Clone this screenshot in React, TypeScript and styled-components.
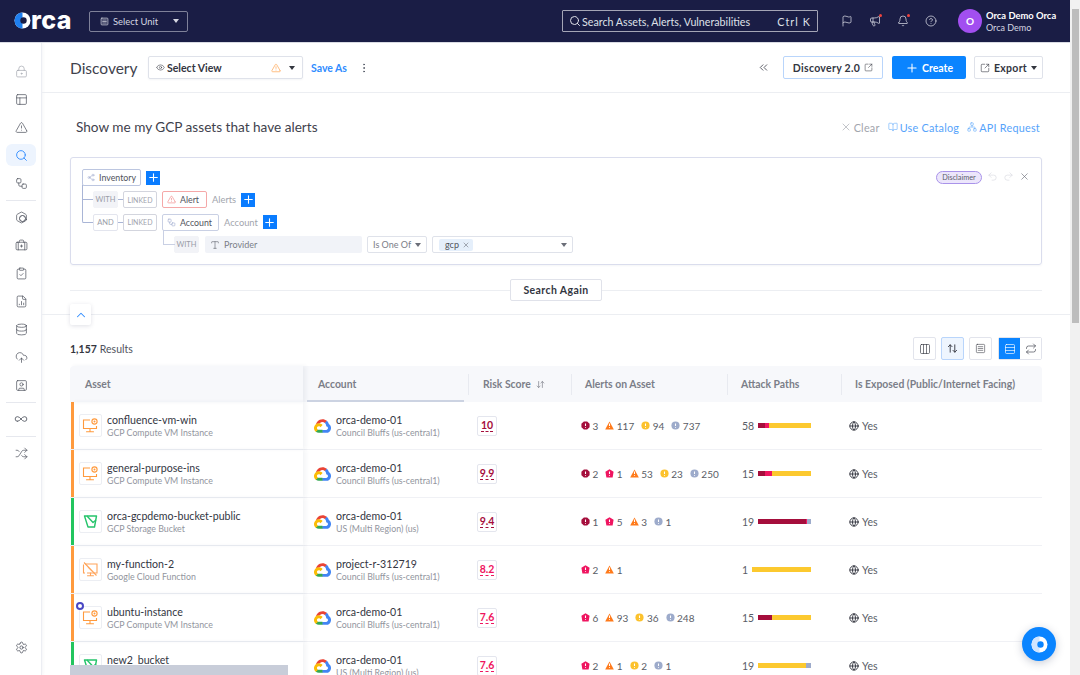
import React from "react";
import styled, { createGlobalStyle } from "styled-components";
import {
  ArrowDownUp, ArrowUpDown, BriefcaseMedical, ChevronUp, ChevronsLeft, CircleHelp, ClipboardCheck, CloudUpload, Columns3,
  Database, Eye, Flag, Globe, Hexagon, Infinity as InfinityIcon, LockKeyhole, Megaphone, Bell, PanelsTopLeft,
  Plus, Redo2, Repeat, Rows3, Search, Settings, Share2, Shuffle, SquareArrowOutUpRight, SquareMenu, SquareUser,
  TriangleAlert, Type, Undo2, Workflow, X, EllipsisVertical, BookOpen, FileChartColumn, Network,
} from "lucide-react";

const GlobalStyle = createGlobalStyle`
  html, body { margin: 0; padding: 0; height: 100%; overflow: hidden; background: #fff; }
  * { box-sizing: border-box; }
  body { font-family: "Lato", "Open Sans", sans-serif; color: #3c3f4a; }
`;

const Page = styled.div`
  height: 100vh;
  overflow: hidden;
  padding-right: 10px;
`;

const ScrollTrack = styled.div`
  position: fixed;
  top: 0;
  right: 0;
  bottom: 0;
  width: 10px;
  background: #f1f1f1;
  padding: 9px 1px 0 2px;
`;

const ScrollThumb = styled.div`
  height: 314px;
  background: #bdbdbd;
`;

const TopBar = styled.header`
  height: 43px;
  background: #1a1d45;
  border-bottom: 1px solid #d9dbe3;
  display: flex;
  align-items: center;
  padding: 0 11px 0 14px;
  color: #fff;
`;

const Logo = styled.div`
  display: flex;
  align-items: center;
  width: 75px;
  font-family: "Inter", sans-serif;
  font-size: 25px;
  font-weight: 800;
  letter-spacing: 0.4px;
  line-height: 1;
  margin-top: -2px;
`;

const UnitSelect = styled.div`
  width: 99px;
  height: 21px;
  border: 1px solid #7f8199;
  border-radius: 2px;
  display: flex;
  align-items: center;
  gap: 4px;
  padding: 0 8px 0 10px;
  font-size: 9.4px;
  color: #d6d7e2;
`;

const Caret = styled.span<{ $color?: string }>`
  margin-left: auto;
  width: 0;
  height: 0;
  border-left: 3px solid transparent;
  border-right: 3px solid transparent;
  border-top: 4px solid ${(p) => p.$color || "#d6d7e2"};
`;

const GlobalSearch = styled.div`
  margin-left: auto;
  width: 256px;
  height: 22px;
  border: 1px solid #a4a5b6;
  border-radius: 1px;
  display: flex;
  align-items: center;
  gap: 1px;
  padding: 0 6px 0 6px;
  font-size: 10.7px;
  color: #dfe0e8;
`;

const Shortcut = styled.span`
  margin-left: auto;
  letter-spacing: 1.1px;
  font-size: 10.7px;
`;

const TopIcons = styled.div`
  display: flex;
  align-items: center;
  gap: 16px;
  margin-left: 23px;
  margin-right: 21px;
  color: #e4e5ee;
`;

const Dotted = styled.span`
  position: relative;
  display: flex;
  &::after {
    content: "";
    position: absolute;
    top: -1px;
    right: -1px;
    width: 3px;
    height: 3px;
    border-radius: 50%;
    background: #f0443e;
  }
`;

const Avatar = styled.div`
  width: 24px;
  height: 24px;
  border-radius: 50%;
  background: #a24ff0;
  color: #fff;
  font-size: 10px;
  font-weight: 700;
  display: flex;
  align-items: center;
  justify-content: center;
`;

const UserInfo = styled.div`
  margin-left: 4px;
  width: 73px;
  display: flex;
  flex-direction: column;
  gap: 1px;
  font-size: 9px;
  line-height: 11px;
  color: #d6d7e2;
  b { color: #fff; font-size: 9.4px; font-weight: 700; white-space: nowrap; }
`;

const Body = styled.div`
  display: flex;
  height: 632px;
  overflow: hidden;
`;

const Sidebar = styled.nav`
  flex: none;
  width: 42px;
  height: 632px;
  border-right: 1px solid #eceef3;
  box-shadow: 1px 0 3px rgba(40, 50, 90, 0.05);
  padding: 14px 5px 14px 6px;
  display: flex;
  flex-direction: column;
  align-items: center;
  color: #4a4e5a;
  background: #fff;
`;

const NavItem = styled.div<{ $active?: boolean; $faint?: boolean }>`
  flex: none;
  width: 30px;
  height: 22px;
  margin: 3px 0;
  border-radius: 6px;
  display: flex;
  align-items: center;
  justify-content: center;
  background: ${(p) => (p.$active ? "#edf4fe" : "transparent")};
  color: ${(p) => (p.$active ? "#2f8cff" : p.$faint ? "#a4a7af" : "inherit")};
`;

const NavRule = styled.div`
  flex: none;
  width: 30px;
  height: 1px;
  margin: 3px 0 2px;
  background: #e6e8ee;
`;

const NavBottom = styled(NavItem)`
  margin-top: auto;
`;

const HexBadge = styled.span`
  position: relative;
  display: flex;
  &::after {
    content: "";
    position: absolute;
    left: 4px;
    top: 4px;
    width: 5px;
    height: 5px;
    border-radius: 50%;
    border: 1px solid #4a4e5a;
  }
`;

const Main = styled.main`
  flex: 1;
  min-width: 0;
`;

const PageHeader = styled.div`
  height: 50px;
  border-bottom: 1px solid #eceef2;
  display: flex;
  align-items: center;
  padding: 0 27px 0 28px;
`;

const Title = styled.h1`
  margin: 0 12px 0 0;
  font-size: 15.5px;
  font-weight: 400;
  color: #3f424d;
  width: 66px;
`;

const ViewSelect = styled.div`
  width: 155px;
  height: 23px;
  border: 1px solid #dfe2ea;
  border-radius: 2px;
  display: flex;
  align-items: center;
  gap: 2px;
  padding: 0 7px;
  font-size: 10.5px;
  font-weight: 700;
  color: #33363f;
  box-shadow: 0 1px 2px rgba(40, 50, 90, 0.05);
`;

const SaveLink = styled.span`
  margin-left: 8px;
  font-size: 10.5px;
  font-weight: 700;
  color: #2f8cff;
`;

const HeaderRight = styled.div`
  margin-left: auto;
  display: flex;
  align-items: center;
`;

const GhostButton = styled.div`
  height: 23px;
  padding: 0 7px;
  display: flex;
  align-items: center;
  gap: 4px;
  border: 1px solid #dfe2ea;
  border-radius: 2px;
  font-size: 10.5px;
  font-weight: 700;
  letter-spacing: 0.3px;
  color: #33363f;
  background: #fff;
`;

const Version = styled(GhostButton)`
  width: 100px;
  margin: 0 9px 0 13px;
  justify-content: center;
  border-color: #b9d5fb;
`;

const CreateButton = styled.div`
  width: 74px;
  height: 23px;
  border-radius: 2px;
  background: #0a84ff;
  color: #fff;
  font-size: 10.5px;
  font-weight: 700;
  display: flex;
  align-items: center;
  justify-content: center;
  gap: 3px;
`;

const ExportButton = styled(GhostButton)`
  width: 69px;
  margin-left: 8px;
  padding: 0 3px;
  justify-content: center;
  svg { flex: none; }
`;

const PromptRow = styled.div`
  height: 64px;
  padding: 24px 30px 20px 34px;
  display: flex;
  align-items: center;
  font-size: 13.6px;
  color: #3f424d;
`;

const PromptActions = styled.div`
  margin-left: auto;
  display: flex;
  align-items: center;
  gap: 8px;
  font-size: 10.8px;
  letter-spacing: 0.25px;
`;

const PromptAction = styled.span<{ $muted?: boolean }>`
  display: flex;
  align-items: center;
  gap: 2px;
  color: ${(p) => (p.$muted ? "#a2a5ad" : "#56a3fb")};
`;

const QueryCard = styled.section`
  margin: 0 28px;
  height: 108px;
  border: 1px solid #dadded;
  border-radius: 3px;
  padding: 11px 11px;
  display: flex;
  justify-content: space-between;
  box-shadow: 0 1px 2px rgba(40, 50, 90, 0.05);
`;

const Tree = styled.div`
  position: relative;
  display: flex;
  flex-direction: column;
  gap: 5.4px;
  &::before {
    content: "";
    position: absolute;
    left: 0;
    top: 16px;
    width: 11px;
    height: 37px;
    border-left: 1px solid #a9b5d6;
    border-bottom: 1px solid #a9b5d6;
    border-bottom-left-radius: 2px;
  }
`;

const TreeRow = styled.div<{ $indent?: number }>`
  height: 17px;
  display: flex;
  align-items: center;
  gap: 5px;
  margin-left: ${(p) => p.$indent || 0}px;
`;

const OpChip = styled.div<{ $filled?: boolean; $line?: boolean }>`
  position: relative;
  width: 25px;
  height: 17px;
  border-radius: 2px;
  background: ${(p) => (p.$filled ? "#f2f3f7" : "#fff")};
  border: 1px solid ${(p) => (p.$filled ? "#f2f3f7" : "#e3e5ee")};
  color: #9a9da8;
  font-size: 7.5px;
  display: flex;
  align-items: center;
  justify-content: center;
  &::before {
    content: "";
    display: ${(p) => (p.$line ? "block" : "none")};
    position: absolute;
    left: -11px;
    top: 7px;
    width: 10px;
    height: 1px;
    background: #a9b5d6;
  }
`;

const LinkedChip = styled.div`
  position: relative;
  width: 34px;
  height: 17px;
  border: 1px solid #d3d5de;
  border-radius: 2px;
  color: #a0a3ad;
  font-size: 7px;
  display: flex;
  align-items: center;
  justify-content: center;
  &::before {
    content: "";
    position: absolute;
    left: -6px;
    top: 7px;
    width: 5px;
    height: 1px;
    background: #a9b5d6;
  }
`;

const EntityChip = styled.div<{ $tone?: string; $w: number }>`
  width: ${(p) => p.$w}px;
  height: 17px;
  border: 1px solid ${(p) => p.$tone || "#c9d0e4"};
  border-radius: 2px;
  display: flex;
  align-items: center;
  gap: 4px;
  padding: 0 4px;
  font-size: 8.8px;
  color: #50535d;
  background: #fff;
`;

const ChipLabel = styled.span`
  font-size: 9.3px;
  color: #a2a5ad;
`;

const AddButton = styled.div`
  width: 14px;
  height: 14px;
  background: #0a7cff;
  color: #fff;
  display: flex;
  align-items: center;
  justify-content: center;
`;

const SubOp = styled(OpChip)`
  &::before {
    display: block;
    left: -12px;
    top: -7px;
    width: 11px;
    height: 14px;
    background: none;
    border-left: 1px solid #c9d0e4;
    border-bottom: 1px solid #c9d0e4;
  }
`;

const FieldBox = styled.div`
  width: 157px;
  height: 17px;
  margin-left: 2px;
  background: #f1f3f8;
  border-radius: 2px;
  display: flex;
  align-items: center;
  gap: 4px;
  padding: 0 5px;
  font-size: 9px;
  color: #7b7e88;
`;

const OpSelect = styled.div<{ $w: number }>`
  width: ${(p) => p.$w}px;
  height: 17px;
  border: 1px solid #dfe2ea;
  border-radius: 2px;
  display: flex;
  align-items: center;
  padding: 0 5px;
  font-size: 9px;
  color: #7b7e88;
`;

const ValueTag = styled.span`
  height: 12px;
  padding: 0 3px 0 6px;
  border-radius: 2px;
  margin-left: 1px;
  background: #e5effb;
  display: flex;
  align-items: center;
  gap: 3px;
  font-size: 9px;
  color: #50535d;
`;

const CardTools = styled.div`
  display: flex;
  align-items: flex-start;
  gap: 5px;
  padding: 2px 0 0 0;
  color: #d5d7de;
`;

const Disclaimer = styled.span`
  width: 46px;
  height: 13px;
  border: 1px solid #a993ea;
  border-radius: 7px;
  background: #ece6fb;
  color: #5a5d6a;
  font-size: 7.3px;
  display: flex;
  align-items: center;
  justify-content: center;
`;

const SearchAgainRow = styled.div`
  margin: 14px 28px 0;
  display: flex;
  align-items: center;
`;

const Rule = styled.div`
  flex: 1;
  height: 1px;
  background: #eceef2;
`;

const SearchAgain = styled.div`
  width: 92px;
  height: 22px;
  border: 1px solid #e0e2ea;
  border-radius: 2px;
  font-size: 10.5px;
  font-weight: 700;
  letter-spacing: 0.4px;
  color: #33363f;
  display: flex;
  align-items: center;
  justify-content: center;
`;

const CollapseRow = styled.div`
  position: relative;
  height: 21px;
  margin-top: 3px;
  padding-left: 28px;
  &::before {
    content: "";
    position: absolute;
    left: 0;
    right: 0;
    top: 10px;
    height: 1px;
    background: #eceef2;
  }
`;

const CollapseButton = styled.div`
  position: relative;
  width: 21px;
  height: 21px;
  border-radius: 2px;
  background: #fff;
  box-shadow: 0 1px 4px rgba(40, 50, 90, 0.15);
  color: #2f8cff;
  display: flex;
  align-items: center;
  justify-content: center;
`;

const ResultsBar = styled.div`
  margin: 12px 28px 0;
  height: 23px;
  display: flex;
  align-items: center;
  font-size: 10.5px;
  color: #50535d;
  b { color: #33363f; margin-right: 3px; }
`;

const ViewTools = styled.div`
  margin-left: auto;
  display: flex;
  gap: 5px;
`;

const ToolButton = styled.div<{ $on?: boolean }>`
  width: 23px;
  height: 23px;
  border: 1px solid ${(p) => (p.$on ? "#b9d5fb" : "#e2e4ec")};
  border-radius: 2px;
  background: ${(p) => (p.$on ? "#eef5fe" : "#fff")};
  color: #33363f;
  display: flex;
  align-items: center;
  justify-content: center;
`;

const Segmented = styled.div`
  margin-left: 1px;
  width: 44px;
  height: 23px;
  border: 1px solid #e2e4ec;
  border-radius: 2px;
  display: flex;
`;

const Segment = styled.div<{ $on?: boolean }>`
  flex: 1;
  background: ${(p) => (p.$on ? "#0a84ff" : "#fff")};
  color: ${(p) => (p.$on ? "#fff" : "#3c3f4a")};
  display: flex;
  align-items: center;
  justify-content: center;
`;

const Table = styled.div`
  margin: 6px 28px 0;
`;

const columns = "233px 165px 103px 156px 114px 1fr";

const HeaderRow = styled.div`
  display: grid;
  grid-template-columns: ${columns};
  height: 36px;
  background: #f7f8fb;
  border-radius: 4px 4px 0 0;
  font-size: 10.4px;
  font-weight: 700;
  color: #7b7e88;
`;

const HeadCell = styled.div<{ $pad: number; $rule?: boolean }>`
  position: relative;
  display: flex;
  align-items: center;
  gap: 5px;
  padding-left: ${(p) => p.$pad}px;
  &::before {
    content: "";
    display: ${(p) => (p.$rule ? "block" : "none")};
    position: absolute;
    left: 0;
    top: 8px;
    height: 21px;
    width: 1px;
    background: #e8eaf0;
  }
`;

const AssetHead = styled(HeadCell)`
  box-shadow: 3px 0 4px rgba(40, 50, 90, 0.06);
`;

const AccountHead = styled(HeadCell)`
  &::after {
    content: "";
    position: absolute;
    left: 4px;
    right: 4px;
    bottom: 0;
    height: 2.5px;
    background: #ccd3e2;
  }
`;

const Row = styled.div`
  display: grid;
  grid-template-columns: ${columns};
  height: 48px;
  border-bottom: 1px solid #f0f1f5;
`;

const AssetCell = styled.div<{ $bar: string }>`
  margin-left: 1px;
  border-left: 3px solid ${(p) => p.$bar};
  padding-left: 5px;
  display: flex;
  align-items: center;
  gap: 5px;
  box-shadow: 3px 0 4px rgba(40, 50, 90, 0.05);
`;

const IconBox = styled.div`
  position: relative;
  flex: none;
  width: 23px;
  height: 23px;
  border: 1px solid #eceef3;
  border-radius: 2px;
  display: flex;
  align-items: center;
  justify-content: center;
`;

const PinDot = styled.span`
  position: absolute;
  left: -4px;
  top: -5px;
  width: 8px;
  height: 8px;
  border-radius: 50%;
  background: #fff;
  border: 2px solid #4a47c4;
`;

const Stack = styled.div`
  display: flex;
  flex-direction: column;
  min-width: 0;
`;

const Name = styled.div`
  font-size: 10.6px;
  line-height: 13px;
  color: #33363f;
  white-space: nowrap;
`;

const Sub = styled.div`
  font-size: 8.8px;
  line-height: 11px;
  color: #92959e;
  white-space: nowrap;
`;

const AccountCell = styled.div`
  padding-left: 11px;
  display: flex;
  align-items: center;
  gap: 5px;
`;

const RiskCell = styled.div`
  padding-left: 9px;
  display: flex;
  align-items: center;
`;

const RiskBox = styled.div<{ $color: string }>`
  width: 20px;
  height: 20px;
  border: 1px solid #e4e6ee;
  border-radius: 2px;
  display: flex;
  align-items: center;
  justify-content: center;
  color: ${(p) => p.$color};
  font-size: 10.5px;
  font-weight: 700;
  span {
    line-height: 11px;
    border-bottom: 1px dashed ${(p) => p.$color};
  }
`;

const AlertsCell = styled.div`
  padding-left: 10px;
  display: flex;
  align-items: center;
  gap: 7px;
`;

const AlertCount = styled.span`
  display: flex;
  align-items: center;
  gap: 2.5px;
  font-size: 10px;
  color: #5a5d66;
`;

const PathsCell = styled.div`
  padding-left: 15px;
  display: flex;
  align-items: center;
`;

const PathsInner = styled.div`
  width: 69px;
  display: flex;
  align-items: center;
  gap: 4px;
  font-size: 10.5px;
  color: #5a5d66;
`;

const Bar = styled.div`
  flex: 1;
  height: 4.5px;
  display: flex;
`;

const BarPart = styled.div<{ $w: number; $color: string }>`
  flex: ${(p) => p.$w};
  background: ${(p) => p.$color};
`;

const ExposedCell = styled.div`
  padding-left: 8px;
  display: flex;
  align-items: center;
  gap: 3px;
  font-size: 10.5px;
  color: #5a5d66;
`;

const TableThumb = styled.div`
  position: fixed;
  left: 70px;
  bottom: 0;
  width: 218px;
  height: 10px;
  background: #c8cdd9;
`;

const ChatBubble = styled.div`
  position: fixed;
  left: 1022px;
  top: 627px;
  width: 34px;
  height: 34px;
  border-radius: 50%;
  background: #0a84ff;
  box-shadow: 0 2px 8px rgba(40, 50, 90, 0.25);
  display: flex;
  align-items: center;
  justify-content: center;
`;

// crescent on the left, solid on the right, hole pushed to the right
function LogoRing({ left, hole }: { left: string; hole: string }) {
  return (
    <svg width="17" height="17" viewBox="0 0 17 17" style={{ flex: "none", marginRight: 0 }}>
      <circle cx="8.5" cy="8.5" r="8" fill="#fff" />
      <path d="M8.5 .5A8 8 0 0 0 8.5 16.5Z" fill={left} />
      <circle cx="9.5" cy="8.5" r="3.2" fill={hole} />
    </svg>
  );
}

function GoogleCloud() {
  return (
    <svg width="17" height="14" viewBox="0 0 256 206" style={{ flex: "none" }}>
      <path fill="#EA4335" d="M170.25 56.82l22.25-22.25 1.48-9.37C153.44-11.68 88.98-7.5 52.42 33.92 42.27 45.42 34.73 59.76 30.72 74.57l7.97-1.12 44.7-7.35 3.45-3.53c19.88-21.84 53.5-24.78 76.46-6.2l6.95.45z" />
      <path fill="#4285F4" d="M224.2 73.92c-5.14-18.92-15.69-35.93-30.36-48.72l-31.35 31.35c13.24 10.82 20.79 27.13 20.46 44.22v5.57c15.41 0 27.9 12.49 27.9 27.9s-12.49 27.59-27.9 27.59h-55.91l-5.49 5.96v33.48l5.49 5.25h55.91c40.12.32 72.89-31.64 73.2-71.77.19-24.32-11.81-47.14-31.95-60.83" />
      <path fill="#34A853" d="M71.87 205.8h55.84v-44.71H71.87c-3.98 0-7.81-.86-11.42-2.51l-7.92 2.43-22.51 22.36-1.96 7.6c12.62 9.53 28.02 14.9 43.81 14.83" />
      <path fill="#FBBC05" d="M71.87 60.7C31.74 60.94-.59 93.67-.35 133.8c.13 22.4 10.6 43.5 28.41 57.17l32.39-32.39c-14.05-6.35-20.3-22.88-13.95-36.94 6.35-14.05 22.89-20.3 36.94-13.95 6.19 2.8 11.15 7.76 13.95 13.95l32.39-32.39C115.99 71.24 94.55 60.62 71.87 60.7" />
    </svg>
  );
}

function VmIcon() {
  return (
    <svg width="17" height="17" viewBox="0 0 17 17" fill="none" stroke="#ff9a3d" strokeWidth="1.1">
      <path d="M8 3H1.5v8.5h13V9" />
      <path d="M8 11.5v3M4.5 14.8h7" strokeLinecap="round" />
      <circle cx="12.5" cy="4.5" r="2.6" />
      <circle cx="12.5" cy="4.5" r="1" fill="#ff9a3d" stroke="none" />
    </svg>
  );
}

function FunctionIcon() {
  return (
    <svg width="17" height="17" viewBox="0 0 17 17" fill="none" stroke="#ffa45a" strokeWidth="1.1">
      <path d="M3 3H15v9H5M1.5 3.5V12H3" />
      <path d="M8.5 12v2.5M5.5 14.8h6" strokeLinecap="round" />
      <path d="M2 1.5l12.5 13M6 6l4 4" />
    </svg>
  );
}

function BucketIcon() {
  return (
    <svg width="15" height="15" viewBox="0 0 15 15" fill="none" stroke="#25c46b" strokeWidth="1.4" strokeLinejoin="round">
      <path d="M1.5 2H13.5L11.5 13H5L1.5 2Z" />
      <path d="M4 2L10 8.5 13 6" />
    </svg>
  );
}

type Level = "crit" | "high" | "med" | "low" | "info";

function AlertGlyph({ level }: { level: Level }) {
  const shapes: Record<Level, React.ReactNode> = {
    crit: <path fill="#a50e3c" d="M3.5 .5h4l3 3v4l-3 3h-4l-3-3v-4z" />,
    high: <path fill="#ef1560" d="M5.5 .3l5 3-1.2 7H1.7L.5 3.3z" />,
    med: <path fill="#ff7a1a" d="M5.5 .5l5.3 10H.2z" />,
    low: <circle cx="5.5" cy="5.5" r="5" fill="#fcc22d" />,
    info: <circle cx="5.5" cy="5.5" r="5" fill="#9dabcb" />,
  };
  return (
    <svg width="9" height="9" viewBox="0 0 11 11" style={{ flex: "none" }}>
      {shapes[level]}
      <path d="M5.5 3v3.2M5.5 7.3v1" stroke="#fff" strokeWidth="1.3" />
    </svg>
  );
}

type Part = [number, string];

interface IAsset {
  name: string;
  type: string;
  kind: "vm" | "bucket" | "fn";
  pinned?: boolean;
  account: string;
  region: string;
  risk: string;
  riskColor: string;
  alerts: [Level, number][];
  paths: number;
  bar: Part[];
}

const DARK = "#a50e3c";
const PINK = "#ef1560";
const GOLD = "#fcc92f";
const BLUE = "#9dabcb";

const assets: IAsset[] = [
  { name: "confluence-vm-win", type: "GCP Compute VM Instance", kind: "vm", account: "orca-demo-01", region: "Council Bluffs (us-central1)", risk: "10", riskColor: DARK, alerts: [["crit", 3], ["med", 117], ["low", 94], ["info", 737]], paths: 58, bar: [[6.7, DARK], [4, PINK], [42, GOLD]] },
  { name: "general-purpose-ins", type: "GCP Compute VM Instance", kind: "vm", account: "orca-demo-01", region: "Council Bluffs (us-central1)", risk: "9.9", riskColor: DARK, alerts: [["crit", 2], ["high", 1], ["med", 53], ["low", 23], ["info", 250]], paths: 15, bar: [[6.7, DARK], [7.3, PINK], [38.7, GOLD]] },
  { name: "orca-gcpdemo-bucket-public", type: "GCP Storage Bucket", kind: "bucket", account: "orca-demo-01", region: "US (Multi Region) (us)", risk: "9.4", riskColor: DARK, alerts: [["crit", 1], ["high", 5], ["med", 3], ["info", 1]], paths: 19, bar: [[47.7, DARK], [1.5, PINK], [4, BLUE]] },
  { name: "my-function-2", type: "Google Cloud Function", kind: "fn", account: "project-r-312719", region: "Council Bluffs (us-central1)", risk: "8.2", riskColor: PINK, alerts: [["high", 2], ["med", 1]], paths: 1, bar: [[1, GOLD]] },
  { name: "ubuntu-instance", type: "GCP Compute VM Instance", kind: "vm", pinned: true, account: "orca-demo-01", region: "Council Bluffs (us-central1)", risk: "7.6", riskColor: PINK, alerts: [["high", 6], ["med", 93], ["low", 36], ["info", 248]], paths: 15, bar: [[14, DARK], [38.7, GOLD]] },
  { name: "new2_bucket", type: "GCP Storage Bucket", kind: "bucket", account: "orca-demo-01", region: "US (Multi Region) (us)", risk: "7.6", riskColor: PINK, alerts: [["high", 2], ["med", 1], ["low", 2], ["info", 1]], paths: 19, bar: [[47.5, GOLD], [5.5, BLUE]] },
];

const kindIcon = { vm: <VmIcon />, bucket: <BucketIcon />, fn: <FunctionIcon /> };

const navMiddle = [BriefcaseMedical, ClipboardCheck, FileChartColumn, Database, CloudUpload, SquareUser];

export default function App() {
  return (
    <Page>
      <GlobalStyle />
      <TopBar>
        <Logo>
          <LogoRing left="#1f7fef" hole="#1a1d45" />
          rca
        </Logo>
        <UnitSelect>
          <SquareMenu size={9} />
          Select Unit
          <Caret />
        </UnitSelect>
        <GlobalSearch>
          <Search size={12} />
          Search Assets, Alerts, Vulnerabilities
          <Shortcut>Ctrl K</Shortcut>
        </GlobalSearch>
        <TopIcons>
          <Flag size={12} strokeWidth={1.4} />
          <Dotted>
            <Megaphone size={12} strokeWidth={1.4} />
          </Dotted>
          <Dotted>
            <Bell size={12} strokeWidth={1.4} />
          </Dotted>
          <CircleHelp size={12} strokeWidth={1.4} />
        </TopIcons>
        <Avatar>O</Avatar>
        <UserInfo>
          <b>Orca Demo Orca</b>
          Orca Demo
        </UserInfo>
      </TopBar>
      <Body>
        <Sidebar>
          <NavItem $faint>
            <LockKeyhole size={13} strokeWidth={1.3} />
          </NavItem>
          <NavItem>
            <PanelsTopLeft size={13} strokeWidth={1.3} />
          </NavItem>
          <NavItem>
            <TriangleAlert size={13} strokeWidth={1.3} />
          </NavItem>
          <NavItem $active>
            <Search size={13} strokeWidth={1.7} />
          </NavItem>
          <NavItem>
            <Workflow size={13} strokeWidth={1.3} />
          </NavItem>
          <NavRule />
          <NavItem>
            <HexBadge>
              <Hexagon size={13} strokeWidth={1.3} />
            </HexBadge>
          </NavItem>
          {navMiddle.map((Icon, i) => (
            <NavItem key={i}>
              <Icon size={13} strokeWidth={1.3} />
            </NavItem>
          ))}
          <NavRule />
          <NavItem>
            <InfinityIcon size={14} strokeWidth={1.4} />
          </NavItem>
          <NavRule />
          <NavItem>
            <Shuffle size={13} strokeWidth={1.3} />
          </NavItem>
          <NavBottom>
            <Settings size={13} strokeWidth={1.4} />
          </NavBottom>
        </Sidebar>
        <Main>
          <PageHeader>
            <Title>Discovery</Title>
            <ViewSelect>
              <Eye size={9} strokeWidth={1.4} />
              Select View
              <TriangleAlert size={10} color="#ff9a3d" strokeWidth={1.5} style={{ marginLeft: "auto", marginRight: 6 }} />
              <Caret $color="#33363f" style={{ marginLeft: 0 }} />
            </ViewSelect>
            <SaveLink>Save As</SaveLink>
            <EllipsisVertical size={12} strokeWidth={1.8} color="#555a66" style={{ marginLeft: 11 }} />
            <HeaderRight>
              <ChevronsLeft size={13} strokeWidth={1.5} />
              <Version>
                Discovery 2.0
                <SquareArrowOutUpRight size={9} strokeWidth={1.4} />
              </Version>
              <CreateButton>
                <Plus size={14} strokeWidth={1.8} />
                Create
              </CreateButton>
              <ExportButton>
                <SquareArrowOutUpRight size={10} strokeWidth={1.4} />
                Export
                <Caret $color="#33363f" style={{ marginLeft: 0 }} />
              </ExportButton>
            </HeaderRight>
          </PageHeader>

          <PromptRow>
            Show me my GCP assets that have alerts
            <PromptActions>
              <PromptAction $muted>
                <X size={12} strokeWidth={1.3} />
                Clear
              </PromptAction>
              <PromptAction>
                <BookOpen size={10} strokeWidth={1.3} />
                Use Catalog
              </PromptAction>
              <PromptAction>
                <Network size={10} strokeWidth={1.3} />
                API Request
              </PromptAction>
            </PromptActions>
          </PromptRow>

          <QueryCard>
            <Tree>
              <TreeRow>
                <EntityChip $w={59} $tone="#bcc6e0">
                  <Share2 size={9} color="#8a9ac4" strokeWidth={1.3} />
                  Inventory
                </EntityChip>
                <AddButton>
                  <Plus size={13} strokeWidth={2} />
                </AddButton>
              </TreeRow>
              <TreeRow $indent={11}>
                <OpChip $filled $line>WITH</OpChip>
                <LinkedChip>LINKED</LinkedChip>
                <EntityChip $w={45} $tone="#f5a8a8">
                  <TriangleAlert size={9} color="#ee6b6b" strokeWidth={1.4} />
                  Alert
                </EntityChip>
                <ChipLabel>Alerts</ChipLabel>
                <AddButton>
                  <Plus size={13} strokeWidth={2} />
                </AddButton>
              </TreeRow>
              <TreeRow $indent={11}>
                <OpChip $line>AND</OpChip>
                <LinkedChip>LINKED</LinkedChip>
                <EntityChip $w={57}>
                  <Workflow size={9} color="#8a9ac4" strokeWidth={1.3} />
                  Account
                </EntityChip>
                <ChipLabel>Account</ChipLabel>
                <AddButton>
                  <Plus size={13} strokeWidth={2} />
                </AddButton>
              </TreeRow>
              <TreeRow $indent={92}>
                <SubOp $filled>WITH</SubOp>
                <FieldBox style={{ marginLeft: 1 }}>
                  <Type size={10} strokeWidth={1.3} color="#50535d" />
                  Provider
                </FieldBox>
                <OpSelect $w={60}>
                  Is One Of
                  <Caret $color="#6b6e78" />
                </OpSelect>
                <OpSelect $w={141}>
                  <ValueTag>
                    gcp
                    <X size={8} strokeWidth={1.4} />
                  </ValueTag>
                  <Caret $color="#6b6e78" />
                </OpSelect>
              </TreeRow>
            </Tree>
            <CardTools>
              <Disclaimer>Disclaimer</Disclaimer>
              <Undo2 size={11} strokeWidth={1.3} />
              <Redo2 size={11} strokeWidth={1.3} />
              <X size={11} strokeWidth={1.4} color="#6b6e78" />
            </CardTools>
          </QueryCard>

          <SearchAgainRow>
            <Rule />
            <SearchAgain>Search Again</SearchAgain>
            <Rule />
          </SearchAgainRow>

          <CollapseRow>
            <CollapseButton>
              <ChevronUp size={14} strokeWidth={1.8} />
            </CollapseButton>
          </CollapseRow>

          <ResultsBar>
            <b>1,157</b> Results
            <ViewTools>
              <ToolButton>
                <Columns3 size={12} strokeWidth={1.3} />
              </ToolButton>
              <ToolButton $on>
                <ArrowUpDown size={11} strokeWidth={2} />
              </ToolButton>
              <ToolButton>
                <SquareMenu size={11} strokeWidth={1.2} />
              </ToolButton>
              <Segmented>
                <Segment $on>
                  <Rows3 size={12} strokeWidth={1.3} />
                </Segment>
                <Segment>
                  <Repeat size={12} strokeWidth={1.3} />
                </Segment>
              </Segmented>
            </ViewTools>
          </ResultsBar>

          <Table>
            <HeaderRow>
              <AssetHead $pad={15}>Asset</AssetHead>
              <AccountHead $pad={15}>Account</AccountHead>
              <HeadCell $pad={15} $rule>
                Risk Score
                <ArrowDownUp size={9} strokeWidth={1.8} />
              </HeadCell>
              <HeadCell $pad={14} $rule>Alerts on Asset</HeadCell>
              <HeadCell $pad={14} $rule>Attack Paths</HeadCell>
              <HeadCell $pad={14} $rule>Is Exposed (Public/Internet Facing)</HeadCell>
            </HeaderRow>
            {assets.map((a) => (
              <Row key={a.name}>
                <AssetCell $bar={a.kind === "bucket" ? "#22c55e" : "#ff9a3d"}>
                  <IconBox>
                    {a.pinned && <PinDot />}
                    {kindIcon[a.kind]}
                  </IconBox>
                  <Stack>
                    <Name>{a.name}</Name>
                    <Sub>{a.type}</Sub>
                  </Stack>
                </AssetCell>
                <AccountCell>
                  <GoogleCloud />
                  <Stack>
                    <Name>{a.account}</Name>
                    <Sub>{a.region}</Sub>
                  </Stack>
                </AccountCell>
                <RiskCell>
                  <RiskBox $color={a.riskColor}>
                    <span>{a.risk}</span>
                  </RiskBox>
                </RiskCell>
                <AlertsCell>
                  {a.alerts.map(([level, count]) => (
                    <AlertCount key={level}>
                      <AlertGlyph level={level} />
                      {count}
                    </AlertCount>
                  ))}
                </AlertsCell>
                <PathsCell>
                  <PathsInner>
                    {a.paths}
                    <Bar>
                      {a.bar.map(([w, color]) => (
                        <BarPart key={color} $w={w} $color={color} />
                      ))}
                    </Bar>
                  </PathsInner>
                </PathsCell>
                <ExposedCell>
                  <Globe size={10} strokeWidth={2.2} color="#33363f" />
                  Yes
                </ExposedCell>
              </Row>
            ))}
          </Table>
        </Main>
      </Body>
      <ScrollTrack>
        <ScrollThumb />
      </ScrollTrack>
      <TableThumb />
      <ChatBubble>
        <LogoRing left="#cfe4ff" hole="#0a84ff" />
      </ChatBubble>
    </Page>
  );
}
